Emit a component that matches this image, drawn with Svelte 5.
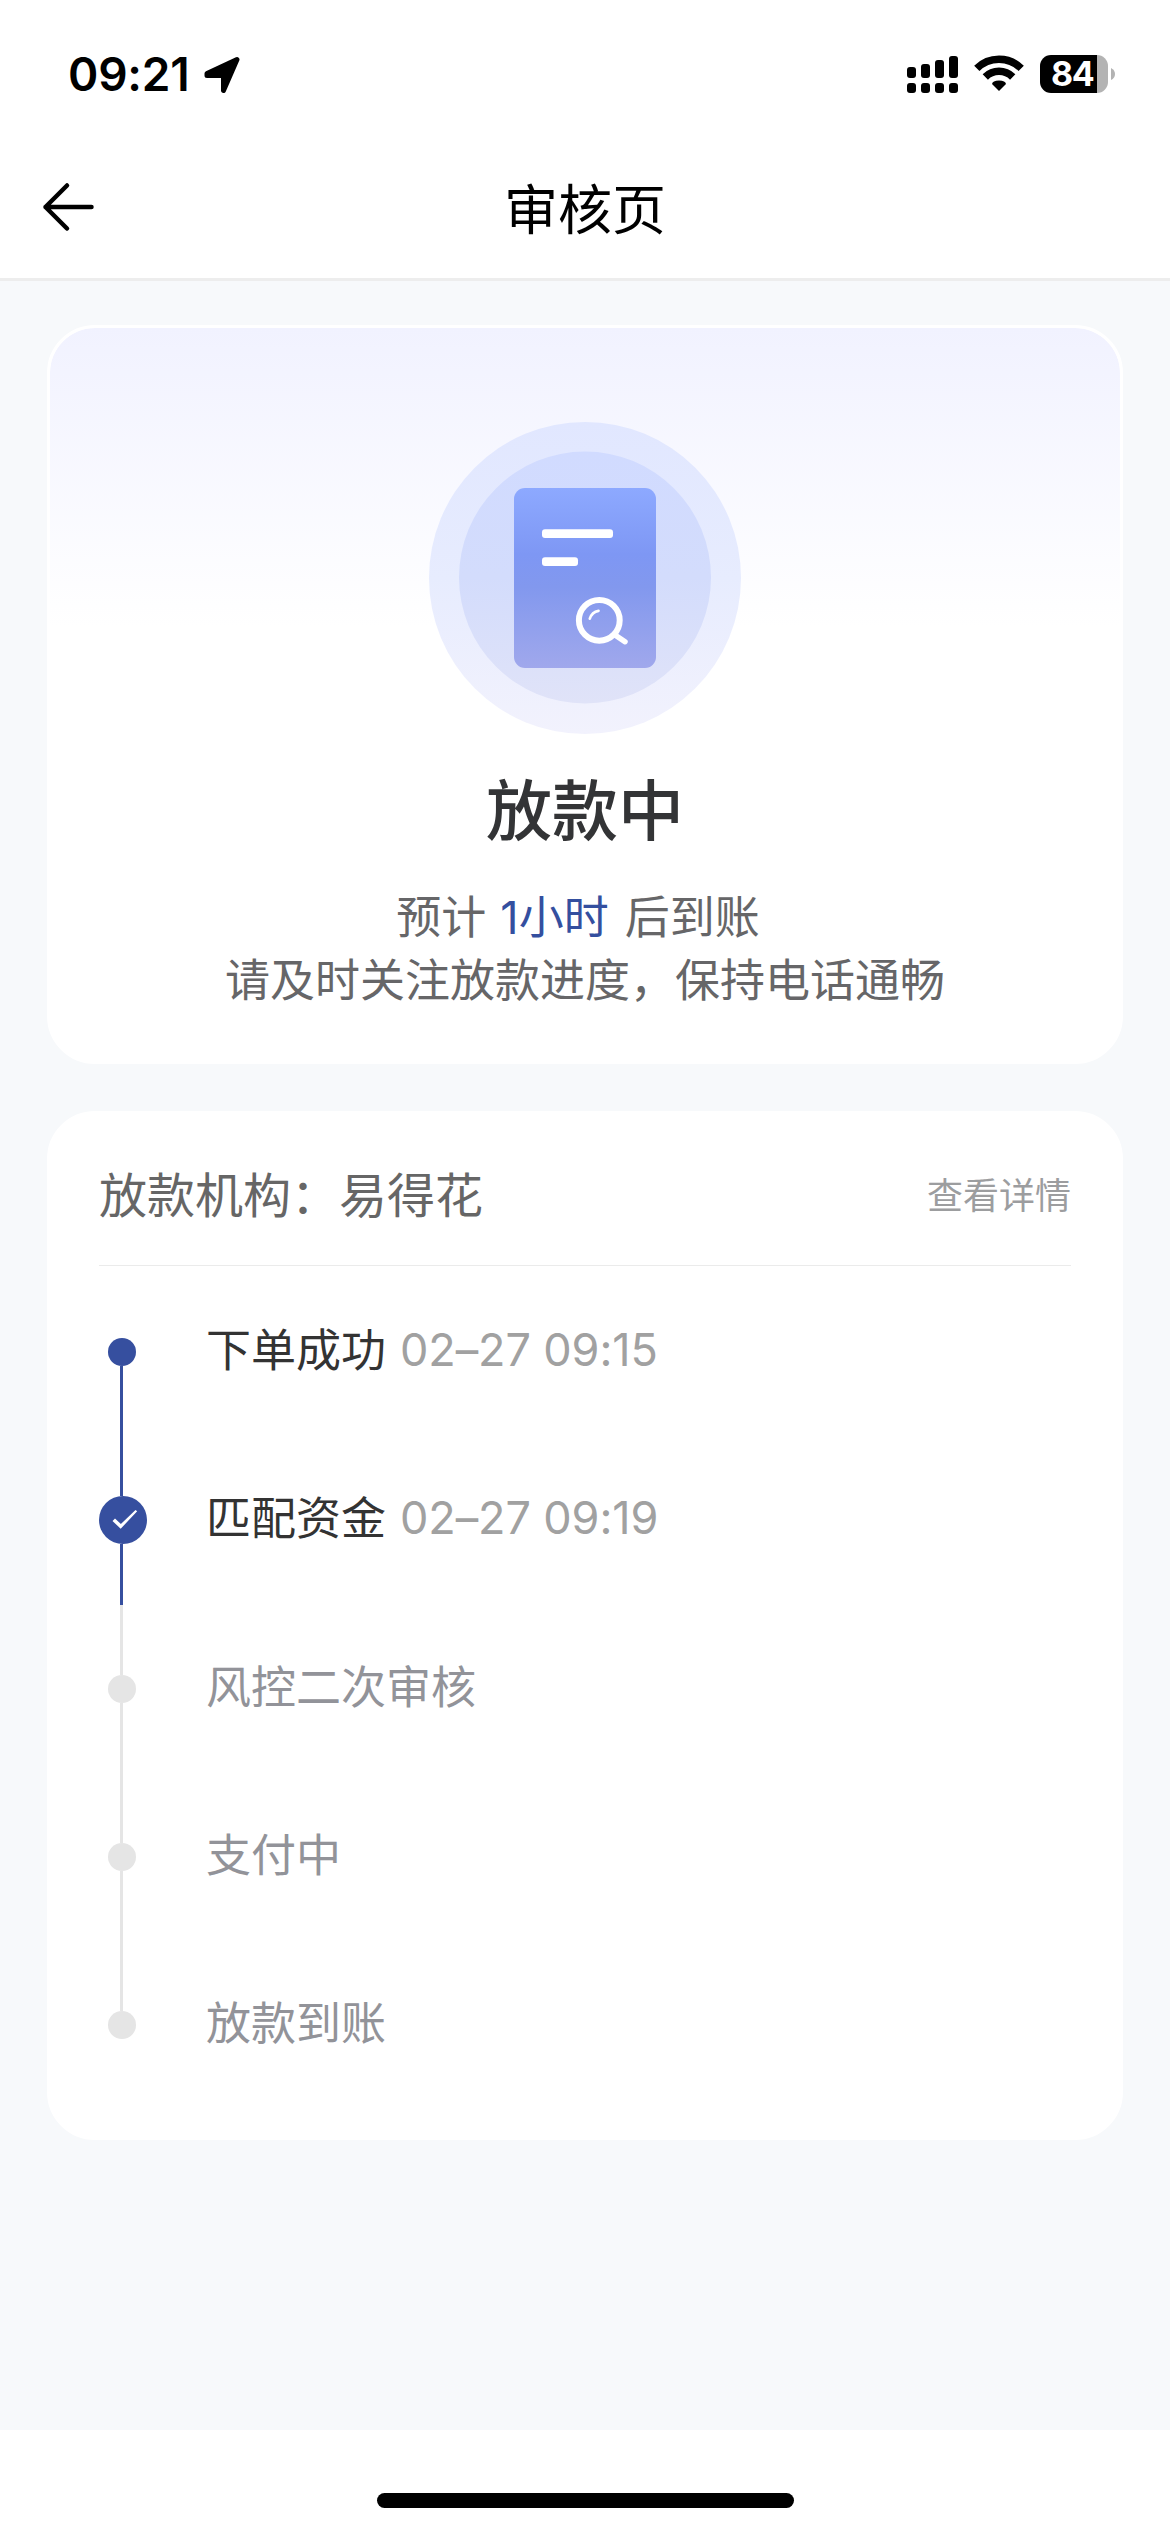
<script>
	const steps = [
		{ name: '下单成功', time: '02–27 09:15', state: 'done' },
		{ name: '匹配资金', time: '02–27 09:19', state: 'current' },
		{ name: '风控二次审核', state: 'todo' },
		{ name: '支付中', state: 'todo' },
		{ name: '放款到账', state: 'todo' }
	];
</script>

<div class="screen">
	<div class="status">
		<span class="clock">09:21</span>
		<svg class="loc" width="38" height="38" viewBox="0 0 38 38">
			<path
				d="M4 18.500 34 4.500 20.500 35.500V20.500H4Z"
				stroke="#000"
				stroke-width="5"
				stroke-linejoin="round"
			/>
		</svg>
		<svg class="signal" width="52" height="38" viewBox="0 0 52 38">
			<rect x="0" y="12" width="9" height="11" rx="3" />
			<rect x="14" y="9" width="9" height="14" rx="3" />
			<rect x="28" y="5" width="9" height="18" rx="3" />
			<rect x="42" y="1" width="9" height="22" rx="3" />
			<rect x="0" y="28" width="9" height="10" rx="3" />
			<rect x="14" y="28" width="9" height="10" rx="3" />
			<rect x="28" y="28" width="9" height="10" rx="3" />
			<rect x="42" y="28" width="9" height="10" rx="3" />
		</svg>
		<svg class="wifi" width="50" height="38" viewBox="0 0 50 38">
			<g fill="none" stroke="#000" stroke-width="7.500">
				<path d="M2.800 13.300a31.500 31.500 0 0 1 44.400 0" />
				<path d="M11.300 22a19.400 19.400 0 0 1 27.400 0" />
			</g>
			<path d="M25 36 18 29Q18.500 25.500 25 25.500T32 29Z" />
		</svg>
		<div class="battery"><span>84</span></div>
		<svg width="4" height="12" viewBox="0 0 4 12"><path d="M0 0Q4 2 4 6T0 12Z" fill="#b3b3b3" /></svg>
	</div>

	<header>
		<svg width="54" height="50" viewBox="0 0 54 50">
			<path
				d="M49.500 25H3.500M25 3.500 3.500 25 25 46.500"
				fill="none"
				stroke="#000"
				stroke-width="4.500"
				stroke-linecap="round"
				stroke-linejoin="round"
			/>
		</svg>
		<h1>审核页</h1>
	</header>

	<main>
		<section class="card result">
			<svg width="312" height="312" viewBox="0 0 312 312">
				<defs>
					<linearGradient id="outer" x1="0" y1="0" x2="0" y2="1">
						<stop offset="0" stop-color="#e1e7ff" />
						<stop offset="0.500" stop-color="#e7ecfe" />
						<stop offset="1" stop-color="#f2f2fd" />
					</linearGradient>
					<linearGradient id="inner" x1="0" y1="0" x2="0" y2="1">
						<stop offset="0" stop-color="#d1dbff" />
						<stop offset="0.500" stop-color="#d3dcfc" />
						<stop offset="1" stop-color="#e0e3f8" />
					</linearGradient>
					<linearGradient id="doc" x1="0" y1="0" x2="0" y2="1">
						<stop offset="0" stop-color="#8da9ff" />
						<stop offset="0.370" stop-color="#7e97f4" />
						<stop offset="0.550" stop-color="#8298ee" />
						<stop offset="1" stop-color="#a0a8ec" />
					</linearGradient>
				</defs>
				<circle cx="156" cy="156" r="156" fill="url(#outer)" />
				<circle cx="156" cy="155.500" r="126" fill="url(#inner)" />
				<rect x="85" y="66" width="142" height="180" rx="11" fill="url(#doc)" />
				<rect x="113" y="107.300" width="71" height="8.700" rx="3" fill="#fff" />
				<rect x="113" y="135.300" width="36" height="8.700" rx="3" fill="#fff" />
				<g fill="none" stroke="#fff" stroke-linecap="round">
					<circle cx="170.300" cy="198.300" r="20.400" stroke-width="6" />
					<path d="M186 213 196 219.700" stroke-width="5.500" />
					<path d="M160.800 196.600Q163 190 169.500 188.800" stroke-width="2.700" />
				</g>
			</svg>
			<h2>放款中</h2>
			<p>预计<em>1小时</em>后到账</p>
			<p>请及时关注放款进度，保持电话通畅</p>
		</section>

		<section class="card detail">
			<div class="org">
				<span>放款机构：易得花</span>
				<a href="#detail">查看详情</a>
			</div>
			<ul>
				{#each steps as step}
					<li class={step.state}>
						<div class="rail">
							<i class="line"></i>
							<div class="node">
								{#if step.state === 'current'}
									<svg width="48" height="48" viewBox="0 0 48 48">
										<path d="M13.500 25 16 22.500 21.900 28 36.500 14 38.200 15.300 21.700 32.700Z" fill="#fff" />
									</svg>
								{/if}
							</div>
							<i class="line"></i>
						</div>
						<span class="name">{step.name}</span>
						{#if step.time}
							<span class="time">{step.time}</span>
						{/if}
					</li>
				{/each}
			</ul>
		</section>
	</main>

	<footer><div class="home"></div></footer>
</div>

<style>
	:global(body) {
		background: #fff;
	}

	.screen {
		width: 1170px;
		height: 2532px;
		display: flex;
		flex-flow: column;
		overflow: hidden;
		background: #fff;
		font-family: 'Noto Sans CJK SC', sans-serif;
	}

	.status {
		height: 148px;
		box-sizing: border-box;
		padding: 0 55px 0 68px;
		display: flex;
		align-items: center;
	}

	.clock {
		width: 124px;
		font: 600 46px/1 Inter, sans-serif;
		letter-spacing: -0.2px;
		white-space: nowrap;
	}

	.loc {
		margin-left: 11px;
	}

	.signal {
		margin-left: auto;
	}

	.wifi {
		margin: 0 16px 0 15px;
	}

	.battery {
		width: 68px;
		height: 38px;
		margin-right: 3px;
		border-radius: 11px;
		background: linear-gradient(90deg, #000 57px, #b3b3b3 57px);
		color: #fff;
		font: 700 34px/38px Inter, sans-serif;
		letter-spacing: -1.5px;
		text-indent: 11px;
	}

	header {
		height: 133px;
		box-sizing: border-box;
		padding: 0 42px 12px;
		border-bottom: 3px solid #ededed;
		display: grid;
		grid-template-columns: 54px 1fr 54px;
		align-items: center;
	}

	h1 {
		margin: 0;
		padding-bottom: 1px;
		text-align: center;
		font-size: 54px;
		font-weight: 400;
		line-height: 60px;
	}

	main {
		height: 2149px;
		box-sizing: border-box;
		padding: 44px 47px 0;
		background: #f7f9fb;
		display: flex;
		flex-flow: column;
		gap: 47px;
	}

	.card {
		box-sizing: border-box;
		border: 3px solid #fff;
		border-radius: 48px;
		background: #fff;
	}

	.result {
		height: 739px;
		padding-top: 94px;
		display: flex;
		flex-flow: column;
		align-items: center;
		background: linear-gradient(#f1f2ff, #fff 300px) padding-box, #fff;
	}

	h2 {
		margin: 22px 0 27px;
		color: #333436;
		font-size: 66px;
		font-weight: 500;
		line-height: 100px;
	}

	p {
		height: 63px;
		margin: 0;
		color: #666668;
		font-size: 45px;
		line-height: 63px;
	}

	p:first-of-type {
		padding-right: 14px;
	}

	em {
		margin: 0 16px 0 14px;
		color: #344f9f;
		font-family: Inter, 'Noto Sans CJK SC', sans-serif;
		font-style: normal;
		line-height: 1;
	}

	.detail {
		height: 1029px;
		padding: 0 49px;
	}

	.org {
		height: 152px;
		padding-top: 4px;
		box-sizing: border-box;
		border-bottom: 1px solid #ebebeb;
		display: flex;
		justify-content: space-between;
		align-items: center;
		color: #666;
		font-size: 48px;
		line-height: 72px;
	}

	.org a {
		padding-top: 3px;
		color: #9c9d9f;
		font-size: 36px;
		text-decoration: none;
	}

	ul {
		margin: 0;
		padding: 2px 0 0;
		list-style: none;
	}

	li {
		height: 168.300px;
		display: flex;
		align-items: center;
		color: #333;
		font-size: 45px;
	}

	.rail {
		width: 48px;
		height: 100%;
		margin-right: 59px;
		display: flex;
		flex-flow: column;
		align-items: center;
	}

	.line {
		flex: 1;
		width: 3px;
		margin-right: 3px;
		background: #364f9f;
	}

	.node {
		width: 28px;
		height: 28px;
		margin-right: 2px;
		border-radius: 50%;
		background: #364f9f;
	}

	.current .node {
		width: 48px;
		height: 48px;
		margin-right: 0;
	}

	.node svg {
		display: block;
	}

	li:first-child .line:first-child,
	li:last-child .line:last-child {
		background: none;
	}

	.todo {
		color: #929399;
	}

	.todo .line,
	.todo .node {
		background: #e5e5e5;
	}

	.name,
	.time {
		padding-bottom: 9px;
	}

	.time {
		margin-left: 14px;
		padding-bottom: 6px;
		color: #a1a1a1;
		font-family: Inter, sans-serif;
		font-weight: 400;
		letter-spacing: -0.1px;
	}

	footer {
		flex: 1;
		display: flex;
		justify-content: center;
		align-items: flex-end;
		padding-bottom: 24px;
	}

	.home {
		width: 417px;
		height: 15px;
		border-radius: 8px;
		background: #000;
	}
</style>
